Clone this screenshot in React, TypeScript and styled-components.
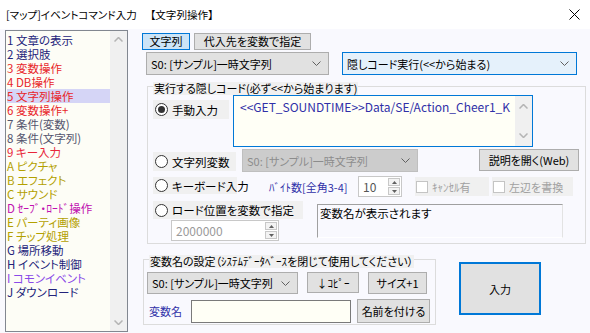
import styled, { createGlobalStyle } from 'styled-components'

const GlobalStyle = createGlobalStyle`
  html, body { margin: 0; padding: 0; background: #fff; }
  body {
    font-family: "Noto Sans CJK JP", "Noto Sans", sans-serif;
    font-size: 11px;
    font-feature-settings: "palt";
    color: #000;
  }
  * { box-sizing: border-box; }
`

const Window = styled.div`
  width: 590px;
  height: 333px;
  overflow: hidden;
  display: flex;
  flex-direction: column;
`

const TitleBar = styled.div`
  height: 29px;
  flex: none;
  display: flex;
  align-items: center;
  justify-content: space-between;
  padding: 0 10px 0 6px;
  background: #fff;
  font-size: 10.6px;
  line-height: 14px;
`

const TitleText = styled.div`
  display: flex;
  gap: 13px;
  white-space: nowrap;
`

const Client = styled.div`
  flex: 1;
  display: flex;
  background: #f9f9fe;
  padding: 1px 0 0 5px;
`

const ListBox = styled.div`
  width: 123px;
  height: 302px;
  border: 1px solid #828790;
  background: #fdfdf6;
  display: flex;
`

const ListItems = styled.div`
  flex: 1;
  padding: 2px 0 0 1px;
  display: flex;
  flex-direction: column;
`

const ListItem = styled.div<{ $color: string; $selected?: boolean }>`
  height: 14px;
  line-height: 14px;
  font-size: 11.5px;
  white-space: nowrap;
  color: ${({ $color }) => $color};
  background: ${({ $selected }) => ($selected ? '#d5d5f6' : 'transparent')};
`

const ScrollBar = styled.div<{ $pad?: number }>`
  width: 17px;
  background: #f0f0f0;
  display: flex;
  flex-direction: column;
  justify-content: space-between;
  align-items: center;
  padding: ${({ $pad }) => $pad ?? 6}px 0;
`

const RightPanel = styled.div`
  margin-left: 14px;
  flex: 1;
  display: flex;
  flex-direction: column;
`

const Tabs = styled.div`
  display: flex;
  gap: 4px;
  margin-top: 3px;
`

const Tab = styled.div<{ $active?: boolean; $w: number }>`
  width: ${({ $w }) => $w}px;
  height: 17px;
  line-height: 15px;
  text-align: center;
  border: 1px solid ${({ $active }) => ($active ? '#0078d7' : '#adadad')};
  background: ${({ $active }) => ($active ? '#cce4f7' : '#e1e1e1')};
`

const ComboRow = styled.div`
  display: flex;
  gap: 13px;
  margin: 2px 0 0 4px;
`

const Combo = styled.div<{ $w: number; $h?: number; $ml?: number; $variant?: 'focus' | 'disabled' }>`
  width: ${({ $w }) => $w}px;
  height: ${({ $h }) => $h ?? 23}px;
  margin-left: ${({ $ml }) => $ml ?? 0}px;
  flex: none;
  display: flex;
  align-items: center;
  justify-content: space-between;
  padding: 0 7px 0 4px;
  white-space: nowrap;
  border: 1px solid
    ${({ $variant }) => ($variant === 'focus' ? '#0078d7' : $variant === 'disabled' ? '#bfbfbf' : '#adadad')};
  background: ${({ $variant }) => ($variant === 'focus' ? '#e5f1fb' : $variant === 'disabled' ? '#cccccc' : '#e1e1e1')};
  color: ${({ $variant }) => ($variant === 'disabled' ? '#8c8c8c' : '#000')};
`

const Group = styled.div<{ $w: number; $h: number; $ml: number; $mt: number }>`
  position: relative;
  flex: none;
  width: ${({ $w }) => $w}px;
  height: ${({ $h }) => $h}px;
  margin: ${({ $mt }) => $mt}px 0 0 ${({ $ml }) => $ml}px;
  border: 1px solid #dcdcdc;
  display: flex;
  flex-direction: column;
`

const GroupTitle = styled.div`
  position: absolute;
  top: -5px;
  left: 5px;
  height: 13px;
  line-height: 13px;
  padding: 0 1px;
  background: #f0f0f0;
  white-space: nowrap;
`

const Row = styled.div<{ $mt: number; $h: number }>`
  display: flex;
  align-items: flex-start;
  margin-top: ${({ $mt }) => $mt}px;
  height: ${({ $h }) => $h}px;
`

const RadioLabel = styled.div<{ $w: number; $h: number; $mt?: number; $ml?: number }>`
  width: ${({ $w }) => $w}px;
  height: ${({ $h }) => $h}px;
  margin: ${({ $mt }) => $mt ?? 0}px 0 0 ${({ $ml }) => $ml ?? 5}px;
  flex: none;
  display: flex;
  align-items: center;
  gap: 4px;
  padding-left: 2px;
  background: #f0f0f0;
  white-space: nowrap;
  font-size: 11.5px;
`

const RadioDot = styled.span<{ $checked?: boolean }>`
  width: 13px;
  height: 13px;
  flex: none;
  border-radius: 50%;
  border: 1px solid #333;
  background: #fff;
  display: flex;
  align-items: center;
  justify-content: center;
  &::after {
    content: '';
    width: 7px;
    height: 7px;
    border-radius: 50%;
    background: ${({ $checked }) => ($checked ? '#333' : 'transparent')};
  }
`

const TextArea = styled.div`
  margin-left: 4px;
  width: 300px;
  height: 52px;
  flex: none;
  border: 1px solid #0078d7;
  background: #fffff6;
  display: flex;
`

const TextAreaText = styled.div`
  flex: 1;
  padding: 3px 0 0 6px;
  color: #3030a8;
  font-size: 12px;
  line-height: 16px;
  white-space: nowrap;
  overflow: hidden;
`

const Button = styled.div<{ $w: number; $h: number; $ml?: number; $mt?: number; $primary?: boolean }>`
  width: ${({ $w }) => $w}px;
  height: ${({ $h }) => $h}px;
  margin: ${({ $mt }) => $mt ?? 0}px 0 0 ${({ $ml }) => $ml ?? 0}px;
  flex: none;
  display: flex;
  align-items: center;
  justify-content: center;
  white-space: nowrap;
  background: #e1e1e1;
  border: ${({ $primary }) => ($primary ? '2px solid #0078d7' : '1px solid #adadad')};
`

const BlueLabel = styled.div<{ $ml: number; $mt: number; $w?: number }>`
  margin: ${({ $mt }) => $mt}px 0 0 ${({ $ml }) => $ml}px;
  width: ${({ $w }) => ($w ? `${$w}px` : 'auto')};
  flex: none;
  color: #3030a8;
  white-space: nowrap;
  line-height: 14px;
`

const SpinBox = styled.div<{ $w: number; $h: number; $ml: number; $mt?: number; $muted?: boolean }>`
  width: ${({ $w }) => $w}px;
  height: ${({ $h }) => $h}px;
  margin: ${({ $mt }) => $mt ?? 0}px 0 0 ${({ $ml }) => $ml}px;
  flex: none;
  border: 1px solid #c8c8c8;
  background: #fff;
  display: flex;
  color: ${({ $muted }) => ($muted ? '#9a9a9a' : '#555')};
`

const SpinValue = styled.div`
  flex: 1;
  padding-left: 4px;
  display: flex;
  align-items: center;
  font-size: 12px;
`

const SpinButtons = styled.div`
  width: 13px;
  display: flex;
  flex-direction: column;
  gap: 1px;
  padding: 1px 1px 1px 0;
`

const SpinBtn = styled.div`
  flex: 1;
  border: 1px solid #c8c8c8;
  background: #f3f3f3;
  display: flex;
  align-items: center;
  justify-content: center;
`

const CheckLabel = styled.div<{ $w: number; $ml: number }>`
  width: ${({ $w }) => $w}px;
  height: 19px;
  margin: 1px 0 0 ${({ $ml }) => $ml}px;
  flex: none;
  display: flex;
  align-items: center;
  gap: 4px;
  padding-left: 1px;
  background: #f0f0f0;
  color: #a0a0a0;
  white-space: nowrap;
`

const CheckBox = styled.span`
  width: 12px;
  height: 12px;
  border: 1px solid #c4c4c4;
  background: #fff;
  flex: none;
`

const Column = styled.div`
  display: flex;
  flex-direction: column;
  flex: none;
`

const StaticBox = styled.div`
  width: 246px;
  height: 34px;
  margin: 4px 0 0 14px;
  flex: none;
  border-top: 1px solid #a0a0a0;
  border-left: 1px solid #a0a0a0;
  border-right: 1px solid #e3e3e3;
  border-bottom: 1px solid #fff;
  padding: 0 0 0 2px;
  line-height: 16px;
  font-size: 11.5px;
  white-space: nowrap;
`

const BottomRow = styled.div`
  display: flex;
  align-items: flex-start;
`

const TextInput = styled.div`
  width: 160px;
  height: 23px;
  margin: 3px 0 0 0;
  flex: none;
  border: 1px solid #7a7a7a;
  background: #fffff6;
`

const Chevron = () => (
  <svg width="9" height="5" viewBox="0 0 9 5">
    <polyline points="0.5,0.5 4.5,4.5 8.5,0.5" fill="none" stroke="#606060" strokeWidth="1" />
  </svg>
)

const ScrollArrow = ({ up }: { up?: boolean }) => (
  <svg width="9" height="5" viewBox="0 0 9 5">
    <polyline
      points={up ? '0.5,4.5 4.5,0.5 8.5,4.5' : '0.5,0.5 4.5,4.5 8.5,0.5'}
      fill="none"
      stroke="#b4b4b4"
      strokeWidth="1.5"
    />
  </svg>
)

const Tri = ({ up }: { up?: boolean }) => (
  <svg width="5" height="3" viewBox="0 0 5 3">
    <polygon points={up ? '0,3 2.5,0 5,3' : '0,0 2.5,3 5,0'} fill="#606060" />
  </svg>
)

const CloseIcon = () => (
  <svg width="11" height="11" viewBox="0 0 11 11">
    <path d="M0.5 0.5 L10.5 10.5 M10.5 0.5 L0.5 10.5" stroke="#000" strokeWidth="1" />
  </svg>
)

const commands: [string, string][] = [
  ['1 文章の表示', '#23237a'],
  ['2 選択肢', '#23237a'],
  ['3 変数操作', '#e8262a'],
  ['4 DB操作', '#e8262a'],
  ['5 文字列操作', '#e8262a'],
  ['6 変数操作+', '#e8262a'],
  ['7 条件(変数)', '#55556e'],
  ['8 条件(文字列)', '#55556e'],
  ['9 キー入力', '#e8263a'],
  ['A ピクチャ', '#b3a000'],
  ['B エフェクト', '#b3a000'],
  ['C サウンド', '#b3a000'],
  ['D ｾｰﾌﾞ・ﾛｰﾄﾞ操作', '#c010b0'],
  ['E パーティ画像', '#b3a000'],
  ['F チップ処理', '#b3a000'],
  ['G 場所移動', '#23237a'],
  ['H イベント制御', '#23237a'],
  ['I コモンイベント', '#8a4ae8'],
  ['J ダウンロード', '#23237a'],
]

const Spin = ({ value, w, h, ml, mt, muted }: { value: string; w: number; h: number; ml: number; mt?: number; muted?: boolean }) => (
  <SpinBox $w={w} $h={h} $ml={ml} $mt={mt} $muted={muted}>
    <SpinValue>{value}</SpinValue>
    <SpinButtons>
      <SpinBtn>
        <Tri up />
      </SpinBtn>
      <SpinBtn>
        <Tri />
      </SpinBtn>
    </SpinButtons>
  </SpinBox>
)

export default function App() {
  return (
    <>
      <GlobalStyle />
      <Window>
        <TitleBar>
          <TitleText>
            <span>[マップ]イベントコマンド入力</span>
            <span>【文字列操作】</span>
          </TitleText>
          <CloseIcon />
        </TitleBar>
        <Client>
          <ListBox>
            <ListItems>
              {commands.map(([label, color], i) => (
                <ListItem key={label} $color={color} $selected={i === 4}>
                  {label}
                </ListItem>
              ))}
            </ListItems>
            <ScrollBar>
              <ScrollArrow up />
              <ScrollArrow />
            </ScrollBar>
          </ListBox>
          <RightPanel>
            <Tabs>
              <Tab $active $w={48}>
                文字列
              </Tab>
              <Tab $w={117}>代入先を変数で指定</Tab>
            </Tabs>
            <ComboRow>
              <Combo $w={183}>
                <span>S0: [サンプル]一時文字列</span>
                <Chevron />
              </Combo>
              <Combo $w={235} $variant="focus">
                <span>隠しコード実行(&lt;&lt;から始まる)</span>
                <Chevron />
              </Combo>
            </ComboRow>

            <Group $w={439} $h={158} $ml={5} $mt={11}>
              <GroupTitle>実行する隠しコード(必ず&lt;&lt;から始まります)</GroupTitle>
              <Row $mt={8} $h={52}>
                <RadioLabel $w={76} $h={19} $mt={5}>
                  <RadioDot $checked />
                  手動入力
                </RadioLabel>
                <TextArea>
                  <TextAreaText>&lt;&lt;GET_SOUNDTIME&gt;&gt;Data/SE/Action_Cheer1_K</TextAreaText>
                  <ScrollBar $pad={8}>
                    <ScrollArrow up />
                    <ScrollArrow />
                  </ScrollBar>
                </TextArea>
              </Row>
              <Row $mt={2} $h={23}>
                <RadioLabel $w={83} $h={19} $mt={3}>
                  <RadioDot />
                  文字列変数
                </RadioLabel>
                <Combo $w={176} $variant="disabled" $ml={6}>
                  <span>S0: [サンプル]一時文字列</span>
                  <Chevron />
                </Combo>
                <Button $w={100} $h={22} $ml={61}>
                  説明を開く(Web)
                </Button>
              </Row>
              <Row $mt={4} $h={21}>
                <RadioLabel $w={84} $h={17} $mt={1}>
                  <RadioDot />
                  キーボード入力
                </RadioLabel>
                <BlueLabel $ml={32} $mt={4} $w={89}>
                  ﾊﾞｲﾄ数[全角3-4]
                </BlueLabel>
                <Spin value="10" w={44} h={21} ml={0} />
                <CheckLabel $w={74} $ml={13}>
                  <CheckBox />
                  ｷｬﾝｾﾙ有
                </CheckLabel>
                <CheckLabel $w={81} $ml={3}>
                  <CheckBox />
                  左辺を書換
                </CheckLabel>
              </Row>
              <Row $mt={3} $h={40}>
                <Column>
                  <RadioLabel $w={150} $h={18} $mt={1}>
                    <RadioDot />
                    ロード位置を変数で指定
                  </RadioLabel>
                  <Spin value="2000000" w={108} h={21} ml={23} mt={1} muted />
                </Column>
                <StaticBox>変数名が表示されます</StaticBox>
              </Row>
            </Group>

            <BottomRow>
              <Group $w={293} $h={66} $ml={1} $mt={15}>
                <GroupTitle>変数名の設定（ｼｽﾃﾑﾃﾞｰﾀﾍﾞｰｽを閉じて使用してください）</GroupTitle>
                <Row $mt={12} $h={22}>
                  <Combo $w={151} $h={22} $ml={3}>
                    <span>S0: [サンプル]一時文字列</span>
                    <Chevron />
                  </Combo>
                  <Button $w={52} $h={21} $ml={9}>
                    ↓ｺﾋﾟｰ
                  </Button>
                  <Button $w={59} $h={22} $ml={9}>
                    サイズ+1
                  </Button>
                </Row>
                <Row $mt={3} $h={26}>
                  <BlueLabel $ml={5} $mt={7} $w={42}>
                    変数名
                  </BlueLabel>
                  <TextInput />
                  <Button $w={73} $h={24} $ml={6} $mt={2}>
                    名前を付ける
                  </Button>
                </Row>
              </Group>
              <Button $w={82} $h={53} $ml={23} $mt={18} $primary>
                入力
              </Button>
            </BottomRow>
          </RightPanel>
        </Client>
      </Window>
    </>
  )
}
